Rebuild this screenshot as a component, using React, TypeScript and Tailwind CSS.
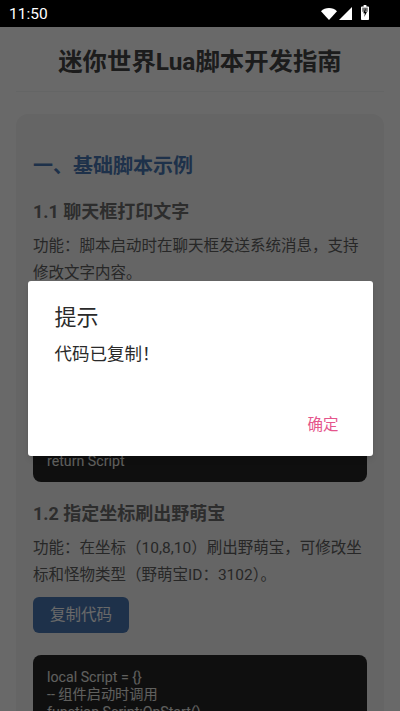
const cjk = "font-['Roboto','Noto_Sans_CJK_SC',sans-serif]";

function StatusBar() {
  return (
    <div className="relative z-20 flex h-[27px] items-center justify-between bg-black pl-[9px] pr-[31px] text-white">
      <span className="pt-[2px] text-[15.5px] leading-none">11:50</span>
      <div className="flex items-center">
        <svg width="16" height="12" viewBox="0 0 16 12">
          <path d="M0 3.2C2.1 1.2 4.9 0 8 0s5.9 1.2 8 3.2L8 12z" fill="#fff" />
        </svg>
        <svg width="13" height="13" viewBox="0 0 13 13" className="ml-[2px]">
          <path d="M13 0V13H0z" fill="#fff" />
        </svg>
        <svg width="8" height="15" viewBox="0 0 8 15" className="mb-[2px] ml-[9px]">
          <path d="M2.6 0h2.8v1.4h1.8c.4 0 .8.4.8.8v12c0 .4-.4.8-.8.8H.8c-.4 0-.8-.4-.8-.8v-12c0-.4.4-.8.8-.8h1.8z" fill="#fff" />
          <path d="M1.2 2.6h5.6v4.2H1.2z" fill="#000" fillOpacity=".55" />
          <path d="M4.7 3 2.2 8.2h1.6L3.3 12l2.6-5H4.2z" fill="#000" />
        </svg>
      </div>
    </div>
  );
}

function CodeBlock({ lines }: { lines: string[] }) {
  return (
    <div className="mt-[22px] overflow-hidden rounded-[8px] bg-[#262626] px-[14px] pb-[12px] pt-[14px] text-[14.2px] leading-[17.2px] text-[#e8e8e4]">
      {lines.map((l, i) => (
        <div key={i} className="whitespace-pre">
          {l}
        </div>
      ))}
    </div>
  );
}

function Example({ title, desc, lines }: { title: string; desc: string; lines: string[] }) {
  return (
    <div className="mt-[18px]">
      <h3 className="text-[18px] font-bold leading-[28px] text-[#6e6e6e]">{title}</h3>
      <p className="mt-[7px] text-[15.5px] leading-[26.5px] text-[#606060]">{desc}</p>
      <button className="mt-[9px] block h-[36px] w-[96px] rounded-[6px] bg-[#4a78b4] text-[15.5px] text-white">
        复制代码
      </button>
      <CodeBlock lines={lines} />
    </div>
  );
}

export default function App() {
  return (
    <div className={`relative h-[711px] w-[400px] overflow-hidden bg-white ${cjk}`}>
      <StatusBar />
      <div className="px-[16px]">
        <h1 className="flex h-[65px] items-center justify-center border-b border-[#f2f4f4] pt-[6px] text-[24.4px] font-bold text-[#444]">
          迷你世界Lua脚本开发指南
        </h1>
        <div className="mt-[22px] rounded-[12px] bg-[#f5f5f5] px-[17px] pt-[39px]">
          <h2 className="text-[20px] font-bold leading-[27px] text-[#4a78b4]">一、基础脚本示例</h2>
          <Example
            title="1.1 聊天框打印文字"
            desc="功能：脚本启动时在聊天框发送系统消息，支持修改文字内容。"
            lines={[
              "local Script = {}",
              "-- 组件启动时调用",
              "function Script:OnStart()",
              '  Chat:sendSystemMsg("Hello")',
              "end",
              "return Script",
            ]}
          />
          <Example
            title="1.2 指定坐标刷出野萌宝"
            desc="功能：在坐标（10,8,10）刷出野萌宝，可修改坐标和怪物类型（野萌宝ID：3102）。"
            lines={["local Script = {}", "-- 组件启动时调用", "function Script:OnStart()", "end"]}
          />
        </div>
      </div>

      {/* dim layer and dialog lie over the page */}
      <div className="absolute inset-0 z-10 bg-black/[0.59]" />
      <div className="absolute left-[27.5px] top-[281px] z-10 flex h-[175px] w-[345px] flex-col rounded-[3px] bg-white pl-[27px] pr-[34px] shadow-md">
        <div className="mt-[22px] text-[22px] leading-[30px] text-[#2a2a2a]">提示</div>
        <div className="mt-[9px] text-[17.5px] leading-[24px] text-[#2a2a2a]">代码已复制！</div>
        <div className="mb-[20px] mt-auto text-right text-[15.5px] leading-[22px] text-[#e5558c]">确定</div>
      </div>
    </div>
  );
}
